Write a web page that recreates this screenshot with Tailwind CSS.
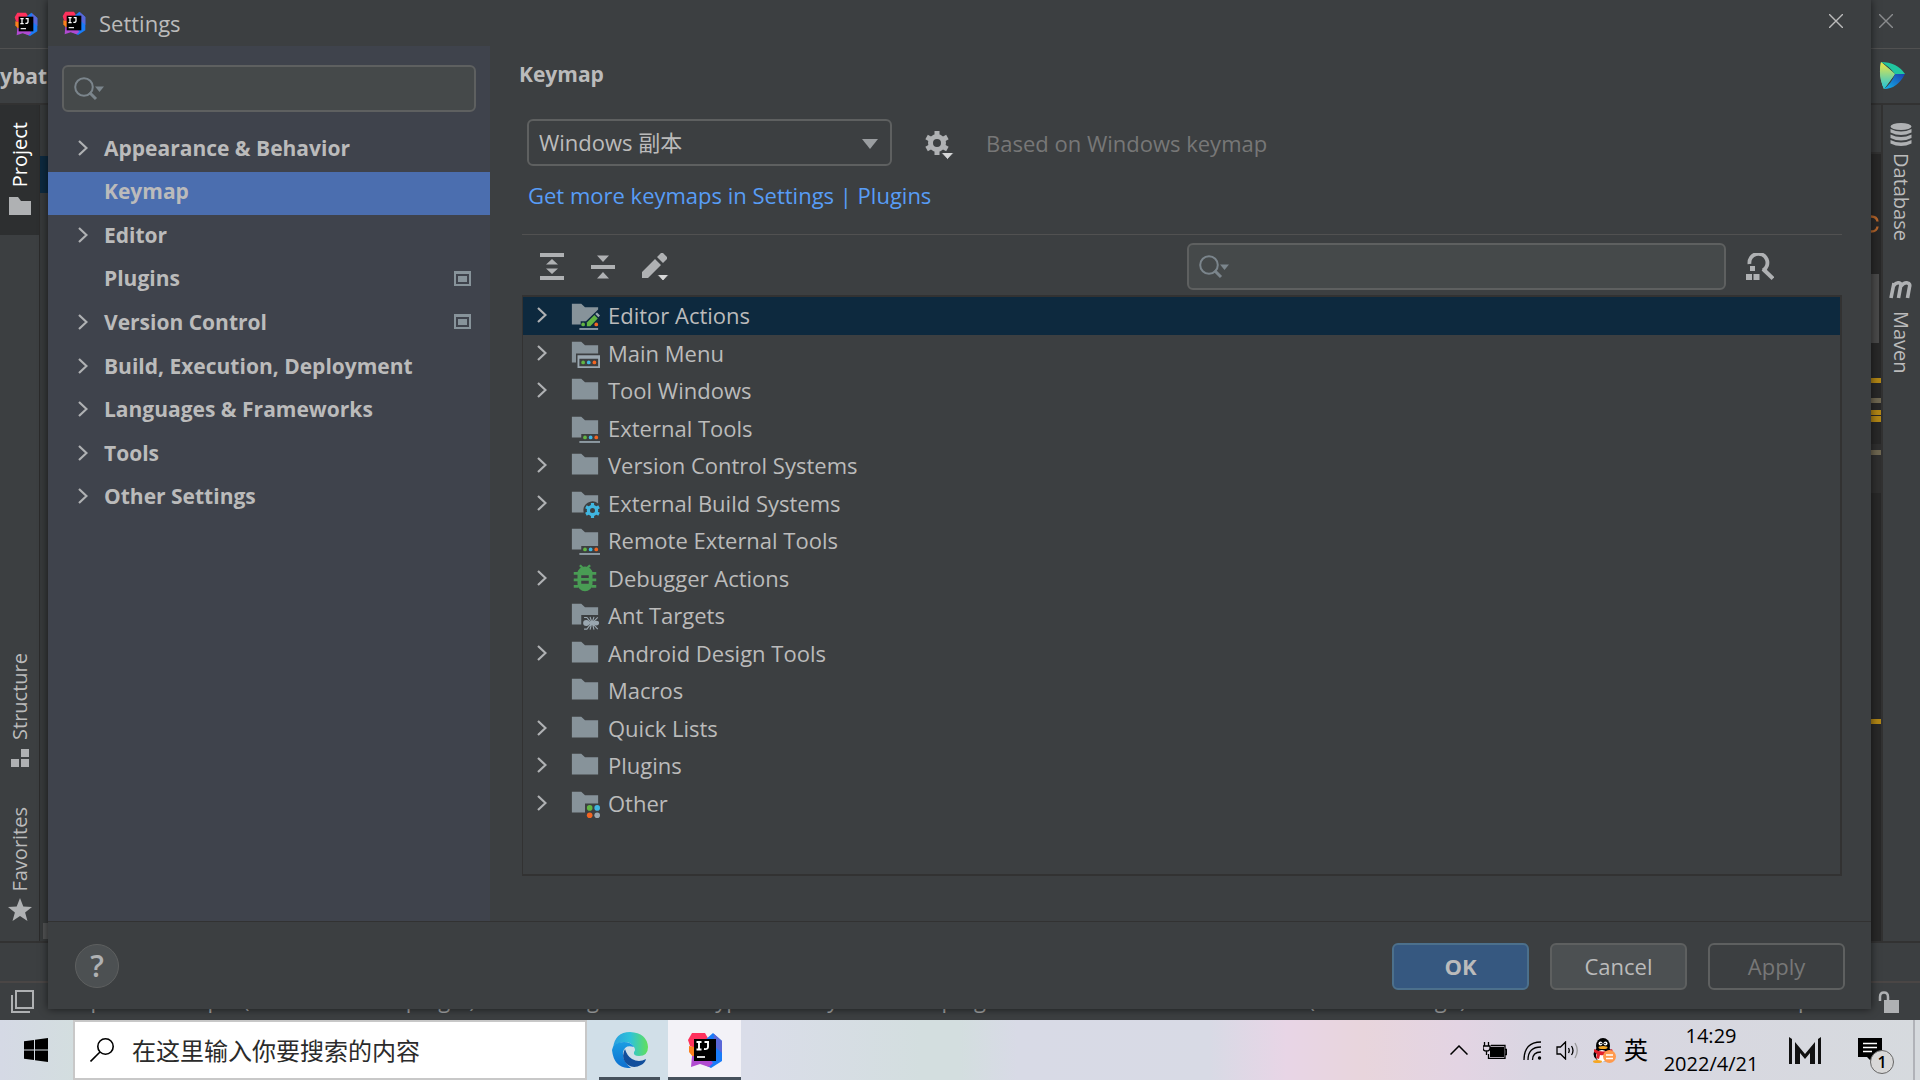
<!DOCTYPE html>
<html lang="en">
<head>
  <meta charset="UTF-8">
  <meta name="viewport" content="width=device-width, initial-scale=1">
  <title>Settings</title>
  <script src="https://cdn.jsdelivr.net/npm/@tailwindcss/browser@4"></script>
</head>
<body class="h-screen flex flex-col overflow-hidden bg-[#3c3f41] text-[#bbbbbb] text-[22px] leading-7 font-['Open_Sans','Noto_Sans_CJK_SC',sans-serif]">

  <!-- Shared icons -->
  <svg class="hidden">
    <symbol id="i-chevron" viewBox="0 0 10 16"><path d="M1 1l7.500 7L1 15" fill="none" stroke="#afb1b3" stroke-width="2.2"/></symbol>
    <symbol id="i-search" viewBox="0 0 30 24">
      <circle cx="10" cy="10" r="8.800" fill="none" stroke="#7b858c" stroke-width="2"/>
      <path d="M15.500 15.500l6.500 6.500" stroke="#7b858c" stroke-width="3"/>
      <path d="M21 9.500h9l-4.500 5.500z" fill="#7b858c"/>
    </symbol>
    <symbol id="i-close" viewBox="0 0 14 14"><path d="M0 0l14 14M14 0L0 14" fill="none" stroke="currentColor" stroke-width="1.400"/></symbol>
    <symbol id="i-idea" viewBox="0 0 36 36">
      <path d="M5 1L18 1L22 8L12 18L3 14L1 8z" fill="#fe315d"/>
      <path d="M2 14l10 2v10l-6-1-4-5z" fill="#fc801d"/>
      <path d="M18 8L26 1l9 8v20l-11 7-10-5z" fill="#1a7cf8"/>
      <path d="M27 2l8 7v12l-9-8z" fill="#5a67d8"/>
      <path d="M5 24h15l6 7-4 4-9-3-9 3z" fill="#b04ad0"/>
      <rect x="7" y="7" width="22" height="22" fill="#000"/>
      <path d="M9.500 10h5M12 10v7M9.500 17.500h5M17.500 10h4.500M21 10v5q0 2.500-4 2" fill="none" stroke="#fff" stroke-width="1.900"/>
      <path d="M10 25h8" stroke="#fff" stroke-width="1.700"/>
    </symbol>
    <symbol id="i-folder" viewBox="0 0 16 16"><path d="M1 13V2h5l2 1.900h7V13z" fill="#87939a"/></symbol>
    <symbol id="i-folder-edit" viewBox="0 0 16 16">
      <path d="M1 13V2h5l2 1.900h7v1.200l-6.500 6.200H5.700V13z" fill="#87939a"/>
      <path d="M9 14v-2l4-4 1.800 1.800L10.800 14z" fill="#62b543"/>
      <path d="M13.500 7.500l.9-.9 1.600 1.700-.9.9z" fill="#9aa7b0"/>
      <circle cx="7" cy="13" r="1" fill="#62b543"/><circle cx="14" cy="13" r="1" fill="#f26522"/>
      <path d="M5 15h10v.9H5z" fill="#9aa7b0"/>
    </symbol>
    <symbol id="i-folder-menu" viewBox="0 0 16 16">
      <path d="M1 13V2h5l2 1.900h7V8.200H3.200V13z" fill="#87939a"/>
      <path d="M4 9.200h12V16H4zM5 11v4h10v-4z" fill="#9aa7b0" fill-rule="evenodd"/>
      <circle cx="7" cy="13" r="1" fill="#62b543"/><circle cx="10" cy="13" r="1" fill="#40b6e0"/><circle cx="13" cy="13" r="1" fill="#f26522"/>
    </symbol>
    <symbol id="i-folder-tools" viewBox="0 0 16 16">
      <path d="M1 13V2h5l2 1.900h7v7.300H6V13z" fill="#87939a"/>
      <circle cx="8" cy="13" r="1" fill="#62b543"/><circle cx="11" cy="13" r="1" fill="#40b6e0"/><circle cx="14" cy="13" r="1" fill="#f26522"/>
      <path d="M5 15h11v.9H5z" fill="#9aa7b0"/>
    </symbol>
    <symbol id="i-folder-gear" viewBox="0 0 16 16">
      <path d="M1 13V2h5l2 1.900h7v4.300a4.800 4.800 0 0 0-7.700 4.800z" fill="#87939a"/>
      <circle cx="12" cy="12" r="2.200" fill="none" stroke="#40b6e0" stroke-width="1.700"/>
      <path d="M12 8v1.800M12 14.200V16M8.500 10l1.600.9M13.900 13.100l1.600.9M8.500 14l1.600-.9M13.900 10.900l1.600-.9" stroke="#40b6e0" stroke-width="1.700"/>
    </symbol>
    <symbol id="i-bug" viewBox="0 0 16 16">
      <path d="M5.300 1.200l2 2M10.700 1.200l-2 2" stroke="#499c54" stroke-width="1.300"/>
      <path d="M4 5.500a4 3.600 0 0 1 8 0V11a4 4 0 0 1-8 0zM6 6.500V8h4V6.500zM6 9.500V11h4V9.500z" fill="#499c54" fill-rule="evenodd"/>
      <path d="M2 5.500h2.500M11.500 5.500H14M2 9h2.500M11.500 9H14M2 12.500h2.500M11.500 12.500H14" stroke="#499c54" stroke-width="1.500"/>
    </symbol>
    <symbol id="i-folder-ant" viewBox="0 0 16 16">
      <path d="M1 13V2h5l2 1.900h7V8H6v5z" fill="#87939a"/>
      <ellipse cx="8.700" cy="12.300" rx="1.700" ry="1.600" fill="#9aa7b0"/><ellipse cx="14" cy="12.300" rx="1.500" ry="1.300" fill="#9aa7b0"/><ellipse cx="11.600" cy="12.300" rx="1.600" ry="1" fill="#9aa7b0"/>
      <path d="M7.500 9.300h1.500l2.500 3-2.500 3.200H7.500M10.700 9l1 3-1 3.800M12.800 9l-1 3 1 3.800M14.800 9.300l-3 3 3 3.200" fill="none" stroke="#9aa7b0" stroke-width=".6"/>
    </symbol>
    <symbol id="i-folder-other" viewBox="0 0 16 16">
      <path d="M1 13V2h5l2 1.900h7V8.200H8V13z" fill="#87939a"/>
      <circle cx="10.500" cy="10.600" r="1.500" fill="#62b543"/><circle cx="14.500" cy="10.600" r="1.500" fill="#40b6e0"/>
      <circle cx="10.500" cy="14.500" r="1.500" fill="#f26522"/><circle cx="14.500" cy="14.500" r="1.500" fill="#9aa7b0"/>
    </symbol>
    <symbol id="i-project-level" viewBox="0 0 17 15"><path d="M0 0h17v15H0zM2 3v10h13V3z" fill="#87939a" fill-rule="evenodd"/><path d="M4 5h9v6H4z" fill="#87939a"/></symbol>
  </svg>

  <div class="relative flex-1 min-h-0 flex flex-col">

    <!-- IDE window behind the dialog -->
    <header class="h-[49px] shrink-0 flex items-center justify-between pl-3.5 pr-[27px] border-b border-[#515151]">
      <svg class="size-6"><use href="#i-idea"/></svg>
      <button aria-label="Close window" class="text-[#8a8c8e] -mt-1.5"><svg class="size-3.5 overflow-visible"><use href="#i-close"/></svg></button>
    </header>
    <div class="h-[56px] shrink-0 flex items-center justify-between pr-[15px] pb-px border-b-2 border-[#323232] text-[21px] font-bold">
      <span>ybat</span>
      <svg class="w-[26px] h-[27px]" viewBox="0 0 26 27">
        <path d="M2 0Q-1 14 5 27L16 12z" fill="#7fe08a"/><path d="M2 0l14 12-11 15Q-1 14 2 0z" fill="url(#space-a)"/>
        <path d="M2 0q16 0 24 12H16Q10 4 2 0z" fill="#21c6a0"/><path d="M26 12Q18 27 5 27q8-6 11-15z" fill="url(#space-b)"/>
        <defs>
          <linearGradient id="space-a" x1="0" y1="0" x2="0" y2="1"><stop stop-color="#f5e83e"/><stop offset="1" stop-color="#1bc4e0"/></linearGradient>
          <linearGradient id="space-b" x1="1" y1="0" x2="0" y2="1"><stop stop-color="#1b3fae"/><stop offset="1" stop-color="#12b5ea"/></linearGradient>
        </defs>
      </svg>
    </div>

    <div class="flex-1 min-h-0 flex border-b-2 border-[#323232] text-xl">
      <div class="w-10 shrink-0 flex flex-col items-center border-r border-[#2b2b2b]">
        <button class="w-full h-[130px] bg-[#2d2f30] text-white flex flex-col items-center justify-end gap-2.5 pb-5">
          <span class="[writing-mode:vertical-rl] rotate-180">Project</span>
          <svg class="w-[22px] h-[18px]" viewBox="0 0 22 18"><path d="M0 18V0h9l3 4h10v14z" fill="#afb1b3"/></svg>
        </button>
        <button class="mt-auto flex flex-col items-center gap-2.5">
          <span class="[writing-mode:vertical-rl] rotate-180">Structure</span>
          <svg class="size-[18px]" viewBox="0 0 18 18"><path d="M10 0h8v8h-8zM0 10h8v8H0zM10 10h8v8h-8z" fill="#afb1b3"/></svg>
        </button>
        <button class="mt-10 mb-[19px] flex flex-col items-center gap-1.5">
          <span class="[writing-mode:vertical-rl] rotate-180">Favorites</span>
          <svg class="size-6" viewBox="0 0 24 24"><path d="M12 0l3.300 8.500 8.700.4-6.900 5.500L19.500 23 12 18l-7.500 5 2.400-8.600L0 8.900l8.700-.4z" fill="#afb1b3"/></svg>
        </button>
      </div>
      <div class="w-2 shrink-0 flex flex-col bg-[#36393a]">
        <div class="mt-[51px] h-[37px] bg-[#0d293e]"></div>
        <div class="mt-auto mb-0.5 ml-[3px] h-4 bg-[#515354]"></div>
      </div>
      <div class="flex-1"></div>

      <!-- Error stripe of the editor -->
      <div class="w-[11px] flex flex-col bg-[#282828]">
        <div class="h-[49px] bg-[#3a3c3d] border-b-2 border-[#323232]"></div>
        <div class="h-[120px] pt-[61px] pl-px overflow-hidden"><svg class="w-2 h-[18px]" viewBox="0 0 8 18"><path d="M0 1.500q6 0 6.500 5M0 16.500q6 0 6.500-5" fill="none" stroke="#b5652b" stroke-width="2.400"/></svg></div>
        <div class="h-[69px] mr-0.5 bg-[#4a4a4a]"></div>
        <div class="mt-[35px] h-[5px] bg-[#b08515]"></div>
        <div class="mt-[15px] h-[5px] bg-[#6e6650]"></div>
        <div class="mt-[7px] h-[5px] bg-[#b08515]"></div>
        <div class="mt-px h-1.5 bg-[#b08515]"></div>
        <div class="mt-[22px] h-[49px] pt-1.5 bg-[#2f2f2f]"><div class="h-[5px] bg-[#6e6650]"></div></div>
        <div class="mt-[226px] h-[5px] bg-[#b08515]"></div>
      </div>
      <div class="w-[39px] shrink-0 flex flex-col items-center pt-[18px] pr-0.5 border-l-2 border-[#323232]">
        <button class="flex flex-col items-center gap-1.5">
          <svg class="w-[22px] h-6" viewBox="0 0 22 24">
            <ellipse cx="11" cy="3.500" rx="10.500" ry="3.500" fill="#afb1b3"/>
            <path d="M.5 6q10.500 5 21 0v3.500q-10.500 5-21 0zM.5 11.500q10.500 5 21 0V15q-10.500 5-21 0zM.5 17q10.500 5 21 0v3.500q-10.500 5-21 0z" fill="#afb1b3"/>
          </svg>
          <span class="[writing-mode:vertical-rl]">Database</span>
        </button>
        <button class="mt-10 flex flex-col items-center gap-3">
          <svg class="w-6 h-[18px]" viewBox="0 0 24 18"><path d="M2 17L5 2M4.500 5q3-4 6-3 2 .7 1 4L9.500 17M11.500 5.500q4-4.500 7-3.500 3 .7 2 4L18.500 17" fill="none" stroke="#afb1b3" stroke-width="3.600"/></svg>
          <span class="[writing-mode:vertical-rl]">Maven</span>
        </button>
      </div>
    </div>
    <div class="h-10 shrink-0 border-b-2 border-[#4a4645]"></div>
    <footer class="h-[37px] shrink-0 flex items-center gap-[15px] pl-[11px] pr-[21px] text-[#a0a2a3]">
      <svg class="w-6 h-[23px] shrink-0" viewBox="0 0 24 23"><path d="M5 1h17v17H5zM1 5v17h18" fill="none" stroke="#afb1b3" stroke-width="2"/></svg>
      <p class="flex-1 pb-1.5 whitespace-nowrap overflow-hidden">File pattern '*.apk' (from 'bundled' plugin) was reassigned to file type 'APK' by 'Android' plugin: You can confirm or revert it. (5 minutes ago)</p>
      <div class="flex gap-[30px] pb-1.5 pr-1.5 whitespace-nowrap">
        <span>54:38</span><span>CRLF</span><span>UTF-8</span><span>4 spaces</span>
      </div>
      <svg class="w-[21px] h-[22px] shrink-0" viewBox="0 0 21 22"><path d="M6 9h15v13H6z" fill="#afb1b3"/><path d="M2 10V6q0-4.500 4-4.500T10 6v3" fill="none" stroke="#afb1b3" stroke-width="2.500"/></svg>
    </footer>

    <!-- Settings dialog -->
    <div role="dialog" aria-label="Settings" class="absolute left-12 right-[49px] top-0 bottom-[11px] flex flex-col bg-[#3c3f41] shadow-[0_0_8px_rgba(0,0,0,0.6)]">
      <div class="h-[46px] shrink-0 flex items-center pl-3.5 pr-7">
        <svg class="size-6"><use href="#i-idea"/></svg>
        <h1 class="ml-[13px] flex-1">Settings</h1>
        <button aria-label="Close" class="-mt-1"><svg class="size-3.5 overflow-visible"><use href="#i-close"/></svg></button>
      </div>

      <div class="flex-1 min-h-0 flex">
        <aside class="w-[442px] shrink-0 bg-[#3f434c] pt-[19px]">
          <label class="mx-3.5 h-[47px] flex items-center gap-2 px-2.5 bg-[#45494a] border-2 border-[#5e6060] rounded-md">
            <svg class="w-[30px] h-6"><use href="#i-search"/></svg>
            <input type="text" aria-label="Search settings" class="flex-1 min-w-0 bg-transparent outline-none">
          </label>
          <nav class="mt-4 h-[392px] grid grid-rows-9 text-[21px] font-bold">
            <a href="#" class="flex items-center pb-1 pl-[30px] pr-[19px]"><span class="w-[26px]"><svg class="w-2.5 h-4"><use href="#i-chevron"/></svg></span>Appearance &amp; Behavior</a>
            <a href="#" class="flex items-center pb-1 pl-14 pr-[19px] bg-[#4b6eaf]" aria-current="page">Keymap</a>
            <a href="#" class="flex items-center pb-1 pl-[30px] pr-[19px]"><span class="w-[26px]"><svg class="w-2.5 h-4"><use href="#i-chevron"/></svg></span>Editor</a>
            <a href="#" class="flex items-center pb-1 pl-14 pr-[19px]">Plugins<svg class="ml-auto w-[17px] h-[15px]"><use href="#i-project-level"/></svg></a>
            <a href="#" class="flex items-center pb-1 pl-[30px] pr-[19px]"><span class="w-[26px]"><svg class="w-2.5 h-4"><use href="#i-chevron"/></svg></span>Version Control<svg class="ml-auto w-[17px] h-[15px]"><use href="#i-project-level"/></svg></a>
            <a href="#" class="flex items-center pb-1 pl-[30px] pr-[19px]"><span class="w-[26px]"><svg class="w-2.5 h-4"><use href="#i-chevron"/></svg></span>Build, Execution, Deployment</a>
            <a href="#" class="flex items-center pb-1 pl-[30px] pr-[19px]"><span class="w-[26px]"><svg class="w-2.5 h-4"><use href="#i-chevron"/></svg></span>Languages &amp; Frameworks</a>
            <a href="#" class="flex items-center pb-1 pl-[30px] pr-[19px]"><span class="w-[26px]"><svg class="w-2.5 h-4"><use href="#i-chevron"/></svg></span>Tools</a>
            <a href="#" class="flex items-center pb-1 pl-[30px] pr-[19px]"><span class="w-[26px]"><svg class="w-2.5 h-4"><use href="#i-chevron"/></svg></span>Other Settings</a>
          </nav>
        </aside>

        <main class="flex-1 min-w-0 flex flex-col pt-3.5 pl-8 pr-[29px] pb-[45px]">
          <h2 class="-ml-[3px] text-[21px] leading-7 font-bold">Keymap</h2>
          <div class="mt-[31px] flex items-center pl-[5px]">
            <div class="relative w-[365px]">
              <select aria-label="Keymap scheme" class="appearance-none w-full h-[47px] px-2.5 pb-0.5 border-2 border-[#5e6060] rounded-md bg-transparent font-['Open_Sans','Noto_Sans_CJK_SC',sans-serif]">
                <option>Windows 副本</option>
              </select>
              <svg class="absolute right-3.5 top-5 w-4 h-2.5 pointer-events-none" viewBox="0 0 16 10"><path d="M0 0h16L8 10z" fill="#9a9da0"/></svg>
            </div>
            <button aria-label="Scheme actions" class="ml-[33px] pt-1">
              <svg class="w-7 h-7 overflow-visible" viewBox="0 0 28 28">
                <circle cx="12" cy="12" r="6.500" fill="none" stroke="#afb1b3" stroke-width="5"/>
                <path d="M12 0v4M12 20v4M1.600 6l3.500 2M18.900 16l3.500 2M1.600 18l3.500-2M18.900 8l3.500-2" stroke="#afb1b3" stroke-width="5"/>
                <path d="M16 21.500h13l-6.500 7z" fill="#d6d7d8" stroke="#3c3f41" stroke-width="1"/>
              </svg>
            </button>
            <span class="ml-[33px] text-[#777777]">Based on Windows keymap</span>
          </div>
          <a href="#" class="mt-[15px] ml-1.5 self-start text-[#589df6]">Get more keymaps in Settings | Plugins</a>

          <div class="mt-[25px] h-[61px] shrink-0 flex items-center border-t border-[#515151] pl-[18px] pt-[3px]">
            <button aria-label="Expand all"><svg class="w-6 h-[27px]" viewBox="0 0 24 27"><path d="M0 0h24v4H0zM0 23h24v4H0zM12 6l6 5.500H6zM12 21l6-5.500H6z" fill="#afb1b3"/></svg></button>
            <button aria-label="Collapse all" class="ml-[27px]"><svg class="w-6 h-6" viewBox="0 0 24 24"><path d="M0 10h24v4H0zM12 7l6-6.500H6zM12 17l6 6.500H6z" fill="#afb1b3"/></svg></button>
            <button aria-label="Edit shortcut" class="ml-[27px]"><svg class="w-[27px] h-7" viewBox="0 0 27 28"><path d="M0 25v-6L13 6l6 6L6 25zM15 4l4-4h2l4 4v2l-4 4z" fill="#afb1b3"/><path d="M15 21.500h12l-6 6.500z" fill="#d6d7d8" stroke="#3c3f41" stroke-width="1"/></svg></button>
            <label class="ml-auto w-[539px] h-[47px] flex items-center gap-2 px-2.5 bg-[#45494a] border-2 border-[#5e6060] rounded-md">
              <svg class="w-[30px] h-6"><use href="#i-search"/></svg>
              <input type="text" aria-label="Search actions" class="flex-1 min-w-0 bg-transparent outline-none">
            </label>
            <button aria-label="Find actions by shortcut" class="ml-5 mr-[68px]">
              <svg class="w-7 h-[27px]" viewBox="0 0 28 27">
                <path d="M3.500 11a9 9 0 1 1 13.500 6.500" fill="none" stroke="#afb1b3" stroke-width="3.800"/>
                <path d="M17 16l10 9.500" stroke="#afb1b3" stroke-width="4"/>
                <path d="M4 13h5v5H4zM0 21h6v6H0zM7.500 21h6v6h-6z" fill="#afb1b3"/>
              </svg>
            </button>
          </div>

          <div class="flex-1 border-2 border-l border-[#323232]">
            <ul class="h-[525px] grid" role="tree">
              <li role="treeitem" class="flex items-center pb-px pl-3.5 bg-[#0d293e]"><svg class="w-2.5 h-4 mr-[23px]"><use href="#i-chevron"/></svg><svg class="size-[30px] mr-2"><use href="#i-folder-edit"/></svg>Editor Actions</li>
              <li role="treeitem" class="flex items-center pb-px pl-3.5"><svg class="w-2.5 h-4 mr-[23px]"><use href="#i-chevron"/></svg><svg class="size-[30px] mr-2"><use href="#i-folder-menu"/></svg>Main Menu</li>
              <li role="treeitem" class="flex items-center pb-px pl-3.5"><svg class="w-2.5 h-4 mr-[23px]"><use href="#i-chevron"/></svg><svg class="size-[30px] mr-2"><use href="#i-folder"/></svg>Tool Windows</li>
              <li role="treeitem" class="flex items-center pb-px pl-[47px]"><svg class="size-[30px] mr-2"><use href="#i-folder-tools"/></svg>External Tools</li>
              <li role="treeitem" class="flex items-center pb-px pl-3.5"><svg class="w-2.5 h-4 mr-[23px]"><use href="#i-chevron"/></svg><svg class="size-[30px] mr-2"><use href="#i-folder"/></svg>Version Control Systems</li>
              <li role="treeitem" class="flex items-center pb-px pl-3.5"><svg class="w-2.5 h-4 mr-[23px]"><use href="#i-chevron"/></svg><svg class="size-[30px] mr-2"><use href="#i-folder-gear"/></svg>External Build Systems</li>
              <li role="treeitem" class="flex items-center pb-px pl-[47px]"><svg class="size-[30px] mr-2"><use href="#i-folder-tools"/></svg>Remote External Tools</li>
              <li role="treeitem" class="flex items-center pb-px pl-3.5"><svg class="w-2.5 h-4 mr-[23px]"><use href="#i-chevron"/></svg><svg class="size-[30px] mr-2"><use href="#i-bug"/></svg>Debugger Actions</li>
              <li role="treeitem" class="flex items-center pb-px pl-[47px]"><svg class="size-[30px] mr-2"><use href="#i-folder-ant"/></svg>Ant Targets</li>
              <li role="treeitem" class="flex items-center pb-px pl-3.5"><svg class="w-2.5 h-4 mr-[23px]"><use href="#i-chevron"/></svg><svg class="size-[30px] mr-2"><use href="#i-folder"/></svg>Android Design Tools</li>
              <li role="treeitem" class="flex items-center pb-px pl-[47px]"><svg class="size-[30px] mr-2"><use href="#i-folder"/></svg>Macros</li>
              <li role="treeitem" class="flex items-center pb-px pl-3.5"><svg class="w-2.5 h-4 mr-[23px]"><use href="#i-chevron"/></svg><svg class="size-[30px] mr-2"><use href="#i-folder"/></svg>Quick Lists</li>
              <li role="treeitem" class="flex items-center pb-px pl-3.5"><svg class="w-2.5 h-4 mr-[23px]"><use href="#i-chevron"/></svg><svg class="size-[30px] mr-2"><use href="#i-folder"/></svg>Plugins</li>
              <li role="treeitem" class="flex items-center pb-px pl-3.5"><svg class="w-2.5 h-4 mr-[23px]"><use href="#i-chevron"/></svg><svg class="size-[30px] mr-2"><use href="#i-folder-other"/></svg>Other</li>
            </ul>
          </div>
        </main>
      </div>

      <div class="h-[88px] shrink-0 flex items-center gap-[21px] pt-px pl-[27px] pr-[26px] border-t border-[#323232]">
        <button aria-label="Help" class="mr-auto size-11 rounded-full bg-[#4c5052] border border-[#5e6060] text-[30px] font-semibold text-[#afb1b3]">?</button>
        <button class="w-[137px] h-[47px] rounded-md bg-[#365880] border-2 border-[#4c708c] font-bold">OK</button>
        <button class="w-[137px] h-[47px] rounded-md bg-[#4c5052] border-2 border-[#5e6060]">Cancel</button>
        <button class="w-[137px] h-[47px] rounded-md border-2 border-[#5e6060] text-[#777777]" disabled>Apply</button>
      </div>
    </div>
  </div>

  <!-- Windows taskbar -->
  <div class="h-[60px] shrink-0 flex items-stretch text-black text-xl bg-[linear-gradient(90deg,#d5d9e5_0%,#d3dedf_4%,#dadde9_39%,#d3dedf_48%,#d3dedf_50%,#d8dae6_53%,#d8dae5_63%,#e8d5e6_67%,#e8d5dc_71%,#e3d4e3_76%,#d9d6e2_80%,#d6dade_100%)]">
    <button aria-label="Start" class="w-[73px] pr-0.5 flex items-center justify-center">
      <svg class="size-6" viewBox="0 0 24 24"><path d="M0 3.300L10 2v9.500H0zM11 1.800L24 0v11.500H11zM0 12.500h10V22L0 20.700zM11 12.500h13V24l-13-1.800z"/></svg>
    </button>
    <label class="w-[514px] flex items-center gap-[18px] pl-[15px] bg-white border-2 border-[#c8c8c8]">
      <svg class="size-6" viewBox="0 0 24 24"><circle cx="15.500" cy="8.500" r="7.700" fill="none" stroke="#000" stroke-width="1.600"/><path d="M10 14L.5 23.500" stroke="#000" stroke-width="1.600"/></svg>
      <input type="text" aria-label="Search Windows" placeholder="在这里输入你要搜索的内容" class="flex-1 min-w-0 pt-0.5 text-2xl placeholder:text-[#2b2b2b] outline-none">
    </label>
    <div class="w-[81px] flex bg-[#d1dfe8] pl-3 pr-2">
      <button aria-label="Microsoft Edge" class="w-[61px] flex items-center justify-center border-b-3 border-[#46515c]">
        <svg class="size-9 mt-[3px]" viewBox="0 0 36 36">
          <defs>
            <linearGradient id="edge-a"><stop stop-color="#2a9fe0"/><stop offset=".5" stop-color="#2fc3d8"/><stop offset="1" stop-color="#62e05a"/></linearGradient>
            <linearGradient id="edge-b" x1="0" y1="0" x2="0" y2="1"><stop stop-color="#1b9de2"/><stop offset="1" stop-color="#0d6fd0"/></linearGradient>
          </defs>
          <path d="M1 16Q3 0 18 0q17 1 18 15 0 9-9 9-6 0-5-4 2-2 0-5-3-5-9-5Q5 10 1 16z" fill="url(#edge-a)"/>
          <path d="M0 18q2-8 12-8 7 0 10 5-9-3-11 5-1 9 8 16Q2 37 0 18z" fill="url(#edge-b)"/>
          <path d="M13 17q-5 9 3 16 6 4 13 0 4-2 5-6-7 4-14 0-5-3-7-10z" fill="#124f9c"/>
        </svg>
      </button>
    </div>
    <button aria-label="IntelliJ IDEA" class="w-[73px] flex items-center justify-center bg-[#f3f2f7] border-b-3 border-[#46515c]"><svg class="size-9 mt-[3px]"><use href="#i-idea"/></svg></button>

    <div class="ml-auto flex items-center">
      <svg class="w-[18px] h-2.5" viewBox="0 0 18 10"><path d="M.5 9.500L9 1l8.500 8.500" fill="none" stroke="#000" stroke-width="1.500"/></svg>
      <svg class="ml-[15px] w-6 h-[17px]" viewBox="0 0 24 17"><path d="M7 5h14v10H7z"/><path d="M8 3.500h14v13H5.500V12M22 7.500h1.500v5H22M1.500 0v4M5.500 0v4M0 4h7v2q0 3-3.500 3T0 6zM3.500 9v4" fill="none" stroke="#000" stroke-width="1.300"/></svg>
      <svg class="ml-4 size-[19px]" viewBox="0 0 19 19"><path d="M1 19Q1 1 18 1M5 19Q5 6 18 6M9.500 19Q9.500 11 18 11" fill="none" stroke="#000" stroke-width="1.300"/><circle cx="16.500" cy="17" r="1.700"/></svg>
      <svg class="ml-3.5 w-[23px] h-[19px]" viewBox="0 0 23 19"><path d="M1 6h3.500L9.500 1v17l-5-5H1zM12.500 7q1.500 2.500 0 5M15.500 5q3 4.500 0 9" fill="none" stroke="#000" stroke-width="1.300"/><path d="M19 2q4.500 7.500 0 15" fill="none" stroke="#999" stroke-width="1.300"/></svg>
      <svg class="ml-3 w-[25px] h-[25px]" viewBox="0 0 25 25">
        <ellipse cx="12" cy="16" rx="9.500" ry="7.500"/><ellipse cx="12" cy="8" rx="7" ry="8"/>
        <ellipse cx="11" cy="18" rx="6" ry="6" fill="#fff"/><ellipse cx="6.500" cy="23.500" rx="4.500" ry="1.500" fill="#f5a623"/>
        <path d="M3 11q9 5 18 0l1 3q-8 4-13 3l-1 4-3-1 1-4-3-2z" fill="#e0202c"/>
        <circle cx="9.500" cy="5.500" r="2" fill="#fff"/><circle cx="14.500" cy="5.500" r="2" fill="#fff"/><circle cx="10" cy="5.500" r=".8"/><circle cx="14" cy="5.500" r=".8"/>
        <ellipse cx="12" cy="9.500" rx="4.500" ry="1.500" fill="#f5a623"/>
        <circle cx="18.500" cy="18.500" r="6.500" fill="#ff9a4d"/><path d="M15 17h7M15 20.500h7" stroke="#fff" stroke-width="1.400"/>
      </svg>
      <span class="ml-2 text-2xl">英</span>
      <div class="ml-3.5 w-[98px] text-center leading-7">14:29<br>2022/4/21</div>
      <svg class="ml-[29px] w-8 h-[27px]" viewBox="0 0 32 27"><path d="M0 0l3 2v25H0zM32 0l-3 2v25h3zM6 5l10 12L26 5v22h-5V16l-5 6-5-6v11H6z" fill="#111"/></svg>
      <div class="relative ml-[37px] w-6 h-6 mr-[31px]">
        <svg class="size-6" viewBox="0 0 24 24"><path d="M0 0h24v19H14v5l-5-5H0z"/><path d="M5 5.500h14M5 9.500h14M5 13.500h9" stroke="#fff" stroke-width="1.300"/></svg>
        <span class="absolute left-3 top-3 size-6 rounded-full bg-[#d8d8d8] border border-[#666666] text-base leading-[22px] font-semibold text-center">1</span>
      </div>
      <div class="w-[7px] h-full border-l-2 border-[#b0b2b8]"></div>
    </div>
  </div>

</body>
</html>
